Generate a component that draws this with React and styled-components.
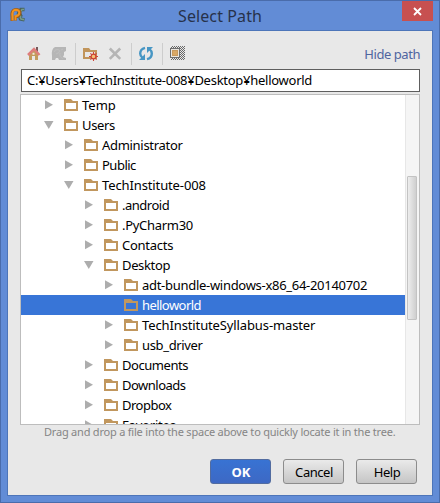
import React from "react";
import styled, { createGlobalStyle } from "styled-components";

const Global = createGlobalStyle`
  *, *::before, *::after { box-sizing: border-box; }
  html, body { margin: 0; padding: 0; overflow: hidden; }
  body { font-family: "Noto Sans", Verdana, sans-serif; }
  svg { display: block; }
`;

const Window = styled.div`
  width: 440px;
  height: 503px;
  display: flex;
  flex-direction: column;
  padding: 0 6px 6px;
  background: #628cd6;
  border: 1px solid #4a6cab;
`;

const TitleBar = styled.header`
  flex: 0 0 29px;
  display: grid;
  grid-template-columns: 20px 1fr 31px;
  align-items: start;
  padding-left: 3px;
`;

const TitleIcon = styled.div`
  padding-top: 6px;
`;

const Title = styled.h1`
  margin: 0;
  padding: 3px 0 0 8px;
  text-align: center;
  font: 400 16px/24px "Noto Sans", sans-serif;
  letter-spacing: 0.1px;
  color: #27324a;
  white-space: nowrap;
`;

const CloseButton = styled.button`
  height: 20px;
  width: 31px;
  padding: 0;
  border: 0;
  display: grid;
  place-items: center;
  background: #c75050;
`;

const Content = styled.main`
  flex: 1;
  min-height: 0;
  display: flex;
  flex-direction: column;
  background: #e8e8e8;
  border: 1px solid #4d75b9;
  padding: 12px 12px 11px;
`;

const Toolbar = styled.div`
  height: 22px;
  display: flex;
  align-items: center;
  padding-left: 6px;
`;

const Tool = styled.div`
  flex: 0 0 16px;
  margin-right: ${(p) => p.$after}px;
`;

const Separator = styled.div`
  width: 1px;
  height: 22px;
  margin-right: ${(p) => p.$after}px;
  background: #cdcdcd;
`;

const HideLink = styled.a`
  margin-left: auto;
  font-size: 13px;
  letter-spacing: ${(p) => p.$track}px;
  line-height: 20px;
  color: #4f65a0;
  white-space: nowrap;
`;

const PathField = styled.div`
  flex: 0 0 23px;
  margin: 4px 0 2px 1px;
  padding-left: 5px;
  border: 1px solid #5e5e5e;
  background: #fff;
  font-size: 13px;
  line-height: 21px;
  letter-spacing: ${(p) => p.$track}px;
  color: #000;
  white-space: nowrap;
`;

const TreePanel = styled.section`
  flex: 0 0 331px;
  display: grid;
  grid-template-columns: 1fr 14px;
  border: 1px solid #bdbdbd;
  background: #fff;
  overflow: hidden;
`;

const TreeRows = styled.ul`
  margin: 0;
  padding: 0;
  height: 329px;
  overflow: hidden;
  list-style: none;
`;

const Row = styled.li`
  height: 20px;
  display: flex;
  align-items: center;
  padding-left: ${(p) => 23 + p.$depth * 20}px;
  background: ${(p) => (p.$selected ? "#3875d7" : "transparent")};
  color: ${(p) => (p.$selected ? "#fff" : "#000")};
`;

const Arrow = styled.span`
  width: 20px;
`;

const RowLabel = styled.span`
  margin-left: 4px;
  font-size: 13px;
  line-height: 20px;
  letter-spacing: ${(p) => p.$track}px;
  white-space: nowrap;
`;

const ScrollTrack = styled.div`
  border-left: 1px solid #e7e7e7;
  background: #f5f5f5;
  padding: 81px 2px 0 1px;
`;

const ScrollThumb = styled.div`
  height: 144px;
  border: 1px solid #c3c3c3;
  border-radius: 1px;
  background: linear-gradient(90deg, #ededed, #cfcfcf);
`;

const Hint = styled.p`
  margin: 0;
  height: 16px;
  padding-left: 24px;
  font-size: 11px;
  line-height: 14px;
  letter-spacing: ${(p) => p.$track}px;
  color: #858585;
  white-space: nowrap;
`;

const Actions = styled.footer`
  margin-top: auto;
  padding-right: 3px;
  display: flex;
  justify-content: flex-end;
  gap: 12px;
`;

const Button = styled.button`
  width: 61px;
  height: 25px;
  padding: 0 0 0 1px;
  border: 1px solid ${(p) => (p.$primary ? "#526ca0" : "#8c8c8c")};
  border-radius: 3px;
  background: ${(p) => (p.$primary ? "linear-gradient(#3873d3, #3d68c4)" : "linear-gradient(#eaeaea, #c5c5c5)")};
  color: ${(p) => (p.$primary ? "#fff" : "#000")};
  font-family: inherit;
  font-size: 13px;
  font-weight: ${(p) => (p.$primary ? 700 : 400)};
  letter-spacing: ${(p) => p.$track || 0}px;
  line-height: 22px;
`;

const AppLogo = () => (
  <svg width="16" height="16" viewBox="0 0 16 16">
    <path d="M8.5 8Q8 5 10.5 4L11 2.5h3.5M12 7.5Q9 9 10.5 12l4 .8" fill="none" stroke="#47645f" strokeWidth="3.4" />
    <path d="M10.5 4.5 12 2.5h2M11 8.5Q9.5 10 11 12l3 .6" fill="none" stroke="#759c8e" strokeWidth="1.6" />
    <path d="M2 14V10Q1 3 5.5 2.5q4.5 0 4.5 3.2Q10 9.2 5.5 10v3.5" fill="none" stroke="#9b5c1e" strokeWidth="3" />
    <path d="M2.5 13.5V9.5Q1.7 3.2 5.5 2.8q3.8 0 3.8 2.9 0 2.8-3.8 3.5v4" fill="none" stroke="#f3941e" strokeWidth="2" />
  </svg>
);

const HomeIcon = () => (
  <svg width="16" height="16" viewBox="0 0 16 16">
    <path d="M10 1h2v5h-2z" fill="#75595a" />
    <path d="M3 8 8 4l4 4v6H9v-4H6v4H3z" fill="#c39a5d" />
    <path d="M2 9 8 3l5.5 6" fill="none" stroke="#de7c7c" strokeWidth="2.5" />
    <path d="M6.5 6.8h2v2h-2z" fill="#f2ead9" />
    <path d="M6.3 11h2.4v3H6.3z" fill="#e8e8e8" />
  </svg>
);

const ProjectIcon = () => (
  <svg width="16" height="16" viewBox="0 0 16 16">
    <path d="M1 14V10Q0 3 4 1h11v4l-2 1v3l-1 2 3 1v2H8l-1-2H5l-1 2z" fill="#b6b6b6" />
    <path d="M3 6q1-3 4-2.5t1 3L5 8M10 4l2-1M9 7q-1 4 3 5.5" fill="none" stroke="#c3c3c3" strokeWidth=".7" />
  </svg>
);

const NewFolderIcon = () => (
  <svg width="16" height="16" viewBox="0 0 16 16">
    <path d="M1 2h6l1.5 2H15v9H1z" fill="#c1955b" />
    <path d="M3 6h10v5H3z" fill="#e8e8e8" />
    <path d="M11.5 6v9M7 10.5h9M8.4 7.4l6.2 6.2M14.6 7.4l-6.2 6.2" stroke="#ce4638" strokeWidth="1.1" />
    <circle cx="11.5" cy="10.5" r="2.4" fill="#f6c075" stroke="#c94334" strokeWidth="1.2" />
  </svg>
);

const DeleteIcon = () => (
  <svg width="16" height="16" viewBox="0 0 16 16">
    <path d="m2.8 2.5 10.4 10.4m0-10.4L2.8 12.9" stroke="#b5b5b5" strokeWidth="2.6" />
  </svg>
);

const RefreshIcon = () => (
  <svg width="16" height="16" viewBox="0 0 16 16">
    <path d="M7 1.8Q2.2 3 2.2 7.5q0 2.6 2.3 4.4M9 13.2Q13.8 12 13.8 7.5q0-2.6-2.3-4.4" fill="none" stroke="#4796c4" strokeWidth="2.4" />
    <path d="M1 14h6V8zM15 1H9v6z" fill="#4796c4" />
  </svg>
);

const HiddenFilesIcon = () => (
  <svg width="16" height="16" viewBox="0 0 16 16" shapeRendering="crispEdges">
    <defs>
      <pattern id="checker" width="2" height="2" patternUnits="userSpaceOnUse">
        <path d="M0 0h1v1H0zM1 1h1v1H1z" fill="#696969" />
      </pattern>
    </defs>
    <path d="M1 0h14v14H1z" fill="url(#checker)" />
    <path d="M0 2h10v10H0z" fill="#6e6e6e" />
    <path d="M1 3h8v8H1z" fill="#e9e5df" />
    <path d="M2 4h6v6H2z" fill="#c8995c" />
    <path d="M3 5h4v4H3z" fill="#d9a865" />
  </svg>
);

const FolderIcon = ({ fill }) => (
  <svg width="14" height="12" viewBox="0 0 14 12">
    <path d="M0 0h7l2 2h5v10H0z" fill="#c1975e" />
    <path d="M2 4h10v6H2z" fill={fill} />
  </svg>
);

const Triangle = ({ open }) => (
  <svg width="10" height="10" viewBox="0 0 10 10">
    <path d={open ? "M0 1h9.5L4.75 9z" : "M1 .3v9L9 4.8z"} fill="#adadad" />
  </svg>
);

const rows = [
  { name: "Temp", depth: 0, state: "closed", track: 0 },
  { name: "Users", depth: 0, state: "open", track: -0.35 },
  { name: "Administrator", depth: 1, state: "closed", track: -0.3 },
  { name: "Public", depth: 1, state: "closed", track: -0.5 },
  { name: "TechInstitute-008", depth: 1, state: "open", track: -0.12 },
  { name: ".android", depth: 2, state: "closed", track: -0.5 },
  { name: ".PyCharm30", depth: 2, state: "closed", track: -0.3 },
  { name: "Contacts", depth: 2, state: "closed", track: -0.25 },
  { name: "Desktop", depth: 2, state: "open", track: -0.35 },
  { name: "adt-bundle-windows-x86_64-20140702", depth: 3, state: "closed", track: -0.29 },
  { name: "helloworld", depth: 3, selected: true, track: -0.55 },
  { name: "TechInstituteSyllabus-master", depth: 3, state: "closed", track: -0.12 },
  { name: "usb_driver", depth: 3, state: "closed", track: -0.35 },
  { name: "Documents", depth: 2, state: "closed", track: -0.45 },
  { name: "Downloads", depth: 2, state: "closed", track: -0.5 },
  { name: "Dropbox", depth: 2, state: "closed", track: -0.5 },
  { name: "Favorites", depth: 2, state: "closed", track: -0.2 },
];

export default function App() {
  return (
    <>
      <Global />
      <Window>
        <TitleBar>
          <TitleIcon><AppLogo /></TitleIcon>
          <Title>Select Path</Title>
          <CloseButton aria-label="Close">
            <svg width="9" height="9" viewBox="0 0 9 9">
              <path d="m1 1 7 7m0-7L1 8" stroke="#fff" strokeWidth="1.8" />
            </svg>
          </CloseButton>
        </TitleBar>
        <Content>
          <Toolbar>
            <Tool $after={9}><HomeIcon /></Tool>
            <Tool $after={8}><ProjectIcon /></Tool>
            <Separator $after={6} />
            <Tool $after={9}><NewFolderIcon /></Tool>
            <Tool $after={8}><DeleteIcon /></Tool>
            <Separator $after={6} />
            <Tool $after={8}><RefreshIcon /></Tool>
            <Separator $after={7} />
            <Tool $after={0}><HiddenFilesIcon /></Tool>
            <HideLink $track={-0.45}>Hide path</HideLink>
          </Toolbar>
          <PathField $track={-0.265}>C:¥Users¥TechInstitute-008¥Desktop¥helloworld</PathField>
          <TreePanel>
            <TreeRows>
              {rows.map((r) => (
                <Row key={r.name} $depth={r.depth} $selected={r.selected}>
                  <Arrow>{r.state && <Triangle open={r.state === "open"} />}</Arrow>
                  <FolderIcon fill={r.selected ? "#3875d7" : "#fff"} />
                  <RowLabel $track={r.track}>{r.name}</RowLabel>
                </Row>
              ))}
            </TreeRows>
            <ScrollTrack><ScrollThumb /></ScrollTrack>
          </TreePanel>
          <Hint $track={-0.21}>Drag and drop a file into the space above to quickly locate it in the tree.</Hint>
          <Actions>
            <Button $primary>OK</Button>
            <Button $track={-0.45}>Cancel</Button>
            <Button $track={-0.5}>Help</Button>
          </Actions>
        </Content>
      </Window>
    </>
  );
}
